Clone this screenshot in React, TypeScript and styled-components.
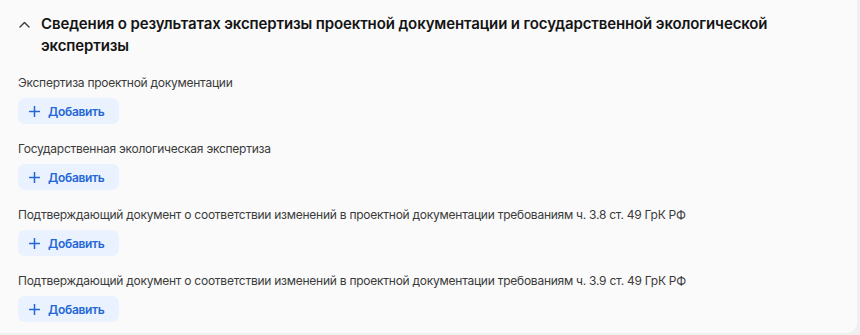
import { createGlobalStyle } from "styled-components";
import styled from "styled-components";

const GlobalStyle = createGlobalStyle`
  html, body {
    margin: 0;
    padding: 0;
    background: #f0f0f1;
  }
  body {
    font-family: Inter, "Noto Sans", sans-serif;
    color: #1f1f1f;
  }
`;

const Card = styled.section`
  width: 857px;
  height: 333px;
  box-sizing: border-box;
  background: #fafafa;
  border-radius: 0 0 10px 0;
  padding: 13px 0 0 18px;
`;

const Header = styled.div`
  display: flex;
  align-items: flex-start;
  gap: 10px;
`;

const Toggle = styled.button`
  flex: none;
  width: 13px;
  height: 22px;
  padding: 0;
  border: 0;
  background: none;
  display: flex;
  align-items: center;
  justify-content: center;
  color: #3a3a3a;
  cursor: pointer;
`;

const Title = styled.h2`
  margin: 0;
  font-size: 15px;
  line-height: 22px;
  font-weight: 600;
  letter-spacing: -0.12px;
  color: #141414;
  padding-right: 20px;
`;

const Fields = styled.div`
  display: flex;
  flex-direction: column;
  gap: 16px;
  margin-top: 17px;
`;

const Field = styled.div`
  display: flex;
  flex-direction: column;
  align-items: flex-start;
  gap: 6px;
`;

const Label = styled.div`
  font-size: 12px;
  line-height: 18px;
  letter-spacing: -0.25px;
  color: #3b3b3b;
`;

const AddButton = styled.button`
  display: flex;
  align-items: center;
  gap: 8px;
  height: 26px;
  width: 101px;
  box-sizing: border-box;
  padding: 0 0 0 11px;
  border: 0;
  border-radius: 7px;
  background: #e9f2fe;
  color: #2467d6;
  font-family: inherit;
  font-size: 12px;
  font-weight: 600;
  letter-spacing: -0.3px;
  cursor: pointer;
`;

const fields = [
  "Экспертиза проектной документации",
  "Государственная экологическая экспертиза",
  "Подтверждающий документ о соответствии изменений в проектной документации требованиям ч. 3.8 ст. 49 ГрК РФ",
  "Подтверждающий документ о соответствии изменений в проектной документации требованиям ч. 3.9 ст. 49 ГрК РФ",
];

export default function App() {
  return (
    <>
      <GlobalStyle />
      <Card>
        <Header>
          <Toggle aria-label="Свернуть">
            <svg width="11" height="7" viewBox="0 0 11 7" fill="none">
              <path d="M1 6 L5.5 1.5 L10 6" stroke="currentColor" strokeWidth="1.4" strokeLinecap="round" strokeLinejoin="round" />
            </svg>
          </Toggle>
          <Title>
            Сведения о результатах экспертизы проектной документации и государственной экологической экспертизы
          </Title>
        </Header>
        <Fields>
          {fields.map((f) => (
            <Field key={f}>
              <Label>{f}</Label>
              <AddButton>
                <svg width="11" height="11" viewBox="0 0 11 11" fill="none">
                  <path d="M5.5 0.5 V10.5 M0.5 5.5 H10.5" stroke="currentColor" strokeWidth="1.5" strokeLinecap="round" />
                </svg>
                Добавить
              </AddButton>
            </Field>
          ))}
        </Fields>
      </Card>
    </>
  );
}
